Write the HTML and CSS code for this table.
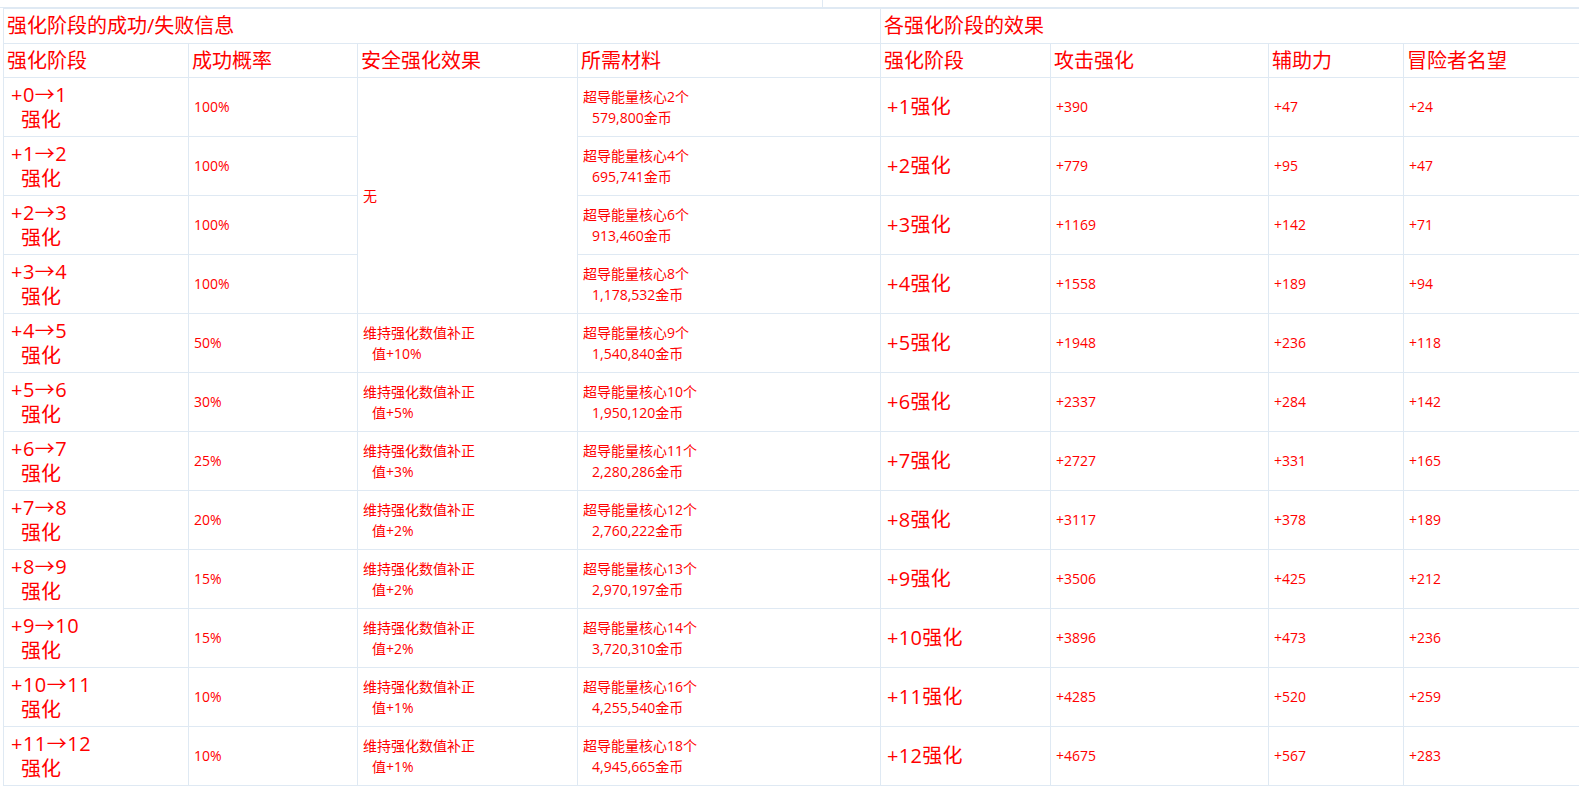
FILE: index.html
```html
<!DOCTYPE html>
<html lang="zh-CN">
<head>
<meta charset="utf-8">
<title>强化阶段</title>
<link rel="stylesheet" href="styles.css">
</head>
<body>
<div class="topstrip"><div class="topcell"></div><div class="topcell last"></div></div>
<table class="grid">
  <colgroup>
    <col class="c1"><col class="c2"><col class="c3"><col class="c4">
    <col class="c5"><col class="c6"><col class="c7"><col class="c8">
  </colgroup>
  <tr class="title-row">
    <td colspan="4" class="big">强化阶段的成功/失败信息</td>
    <td colspan="4" class="big">各强化阶段的效果</td>
  </tr>
  <tr class="head-row">
    <td class="big">强化阶段</td><td class="big">成功概率</td><td class="big">安全强化效果</td><td class="big">所需材料</td>
    <td class="big">强化阶段</td><td class="big">攻击强化</td><td class="big">辅助力</td><td class="big">冒险者名望</td>
  </tr>
  <tr>
    <td class="stage"><span class="l1">+0→1</span><span class="l2">强化</span></td><td>100%</td>
    <td rowspan="4" class="none">无</td>
    <td class="mat"><span class="l1">超导能量核心2个</span><span class="l2">579,800金币</span></td>
    <td class="lvl">+1强化</td><td>+390</td><td>+47</td><td>+24</td>
  </tr>
  <tr>
    <td class="stage"><span class="l1">+1→2</span><span class="l2">强化</span></td><td>100%</td>
    <td class="mat"><span class="l1">超导能量核心4个</span><span class="l2">695,741金币</span></td>
    <td class="lvl">+2强化</td><td>+779</td><td>+95</td><td>+47</td>
  </tr>
  <tr>
    <td class="stage"><span class="l1">+2→3</span><span class="l2">强化</span></td><td>100%</td>
    <td class="mat"><span class="l1">超导能量核心6个</span><span class="l2">913,460金币</span></td>
    <td class="lvl">+3强化</td><td>+1169</td><td>+142</td><td>+71</td>
  </tr>
  <tr>
    <td class="stage"><span class="l1">+3→4</span><span class="l2">强化</span></td><td>100%</td>
    <td class="mat"><span class="l1">超导能量核心8个</span><span class="l2">1,178,532金币</span></td>
    <td class="lvl">+4强化</td><td>+1558</td><td>+189</td><td>+94</td>
  </tr>
  <tr>
    <td class="stage"><span class="l1">+4→5</span><span class="l2">强化</span></td><td>50%</td>
    <td class="mat"><span class="l1">维持强化数值补正</span><span class="l2">值+10%</span></td>
    <td class="mat"><span class="l1">超导能量核心9个</span><span class="l2">1,540,840金币</span></td>
    <td class="lvl">+5强化</td><td>+1948</td><td>+236</td><td>+118</td>
  </tr>
  <tr>
    <td class="stage"><span class="l1">+5→6</span><span class="l2">强化</span></td><td>30%</td>
    <td class="mat"><span class="l1">维持强化数值补正</span><span class="l2">值+5%</span></td>
    <td class="mat"><span class="l1">超导能量核心10个</span><span class="l2">1,950,120金币</span></td>
    <td class="lvl">+6强化</td><td>+2337</td><td>+284</td><td>+142</td>
  </tr>
  <tr>
    <td class="stage"><span class="l1">+6→7</span><span class="l2">强化</span></td><td>25%</td>
    <td class="mat"><span class="l1">维持强化数值补正</span><span class="l2">值+3%</span></td>
    <td class="mat"><span class="l1">超导能量核心11个</span><span class="l2">2,280,286金币</span></td>
    <td class="lvl">+7强化</td><td>+2727</td><td>+331</td><td>+165</td>
  </tr>
  <tr>
    <td class="stage"><span class="l1">+7→8</span><span class="l2">强化</span></td><td>20%</td>
    <td class="mat"><span class="l1">维持强化数值补正</span><span class="l2">值+2%</span></td>
    <td class="mat"><span class="l1">超导能量核心12个</span><span class="l2">2,760,222金币</span></td>
    <td class="lvl">+8强化</td><td>+3117</td><td>+378</td><td>+189</td>
  </tr>
  <tr>
    <td class="stage"><span class="l1">+8→9</span><span class="l2">强化</span></td><td>15%</td>
    <td class="mat"><span class="l1">维持强化数值补正</span><span class="l2">值+2%</span></td>
    <td class="mat"><span class="l1">超导能量核心13个</span><span class="l2">2,970,197金币</span></td>
    <td class="lvl">+9强化</td><td>+3506</td><td>+425</td><td>+212</td>
  </tr>
  <tr>
    <td class="stage"><span class="l1">+9→10</span><span class="l2">强化</span></td><td>15%</td>
    <td class="mat"><span class="l1">维持强化数值补正</span><span class="l2">值+2%</span></td>
    <td class="mat"><span class="l1">超导能量核心14个</span><span class="l2">3,720,310金币</span></td>
    <td class="lvl">+10强化</td><td>+3896</td><td>+473</td><td>+236</td>
  </tr>
  <tr>
    <td class="stage"><span class="l1">+10→11</span><span class="l2">强化</span></td><td>10%</td>
    <td class="mat"><span class="l1">维持强化数值补正</span><span class="l2">值+1%</span></td>
    <td class="mat"><span class="l1">超导能量核心16个</span><span class="l2">4,255,540金币</span></td>
    <td class="lvl">+11强化</td><td>+4285</td><td>+520</td><td>+259</td>
  </tr>
  <tr>
    <td class="stage"><span class="l1">+11→12</span><span class="l2">强化</span></td><td>10%</td>
    <td class="mat"><span class="l1">维持强化数值补正</span><span class="l2">值+1%</span></td>
    <td class="mat"><span class="l1">超导能量核心18个</span><span class="l2">4,945,665金币</span></td>
    <td class="lvl">+12强化</td><td>+4675</td><td>+567</td><td>+283</td>
  </tr>
</table>
</body>
</html>
```

FILE: styles.css
```css
html, body {
  margin: 0;
  padding: 0;
  background: #ffffff;
  overflow: hidden;
}
body {
  font-family: "Open Sans", "Noto Sans CJK SC", sans-serif;
  color: #ff0000;
  font-size: 14px;
}
.topstrip {
  display: flex;
  height: 7px;
  border-bottom: 1px solid #dfe9f3;
}
.topcell {
  width: 822px;
  border-right: 1px solid #dfe9f3;
}
.topcell.last {
  flex: 1;
  border-right: none;
}
.grid {
  margin-left: 3px;
  border-collapse: collapse;
  table-layout: fixed;
  width: 1577px;
}
.grid td {
  border: 1px solid #dfe9f3;
  padding: 0 0 0 5px;
  vertical-align: middle;
  line-height: 20px;
  white-space: nowrap;
  overflow: hidden;
}
.c1 { width: 185px; }
.c2 { width: 169px; }
.c3 { width: 220px; }
.c4 { width: 303px; }
.c5 { width: 170px; }
.c6 { width: 218px; }
.c7 { width: 135px; }
.c8 { width: 177px; }
.grid tr { height: 59px; }
.grid tr.title-row { height: 35px; }
.grid tr.head-row { height: 34px; }
.grid td.big {
  font-size: 20px;
  line-height: 24px;
  padding-left: 3px;
}
.l1, .l2 {
  display: block;
}
.grid td.stage {
  font-size: 20px;
  padding-left: 7px;
}
.stage .l1, .stage .l2 {
  line-height: 25px;
}
.stage .l1 {
  letter-spacing: 0.5px;
}
.stage .l2 {
  padding-left: 10px;
  letter-spacing: 0;
}
.mat .l1, .mat .l2 {
  line-height: 21px;
}
.mat .l2 {
  padding-left: 9px;
}
.none {
  vertical-align: middle;
}
.grid td.lvl {
  font-size: 20px;
  padding-left: 6px;
  letter-spacing: 0.3px;
}
```
